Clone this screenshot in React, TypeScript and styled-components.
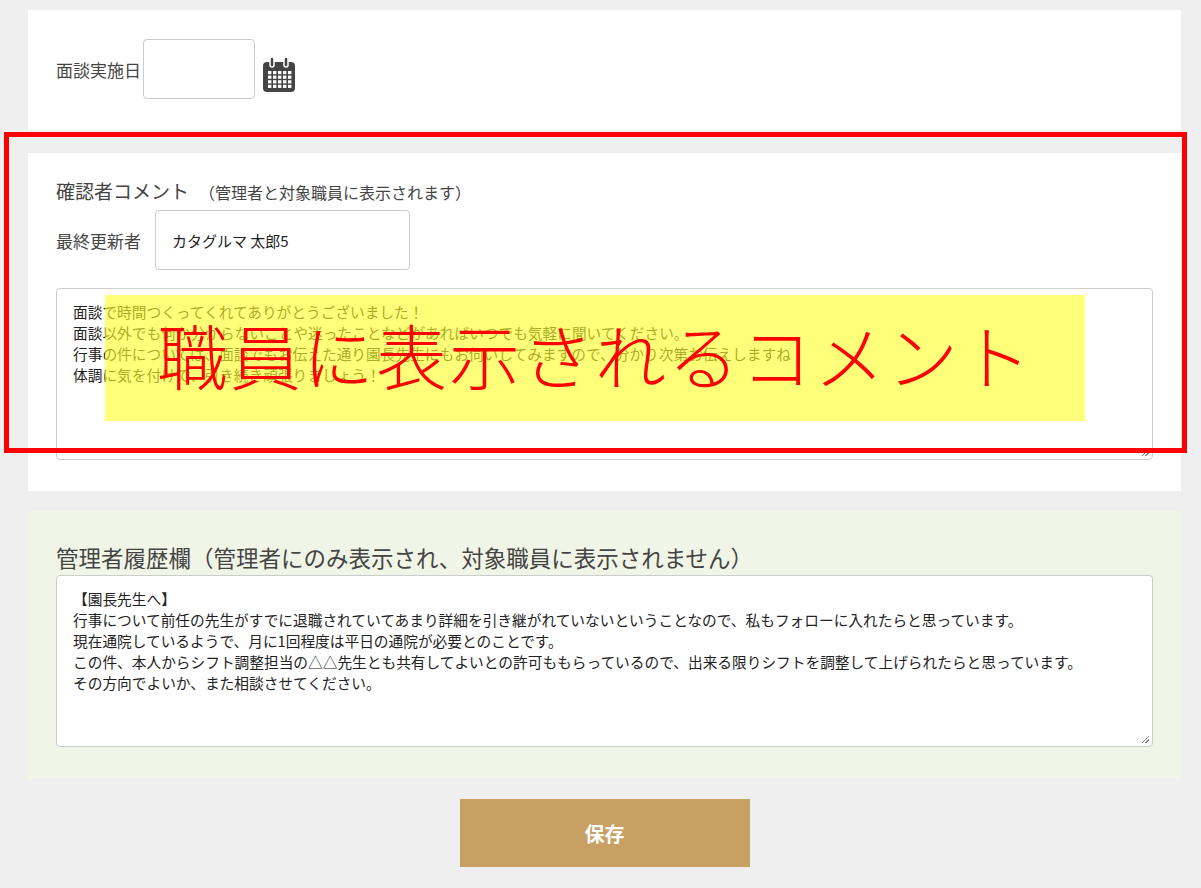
import React from 'react';
import styled, { createGlobalStyle } from 'styled-components';

const Global = createGlobalStyle`
  body {
    margin: 0;
    background: #efefef;
    font-family: "Noto Sans CJK JP", "Noto Sans", sans-serif;
    color: #333;
  }
`;

const Page = styled.div`
  position: relative;
  width: 1153px;
  margin: 0 0 0 28px;
  padding: 10px 0 21px;
  display: flex;
  flex-direction: column;
`;

const Card = styled.section<{ $bg?: string; $mt?: number }>`
  box-sizing: border-box;
  background: ${(p) => p.$bg || '#fff'};
  margin-top: ${(p) => p.$mt || 0}px;
  padding: 0 28px;
  display: flex;
  flex-direction: column;
`;

const Row = styled.div<{ $gap: number }>`
  display: flex;
  align-items: center;
  gap: ${(p) => p.$gap}px;
`;

const Label = styled.span`
  font-size: 17px;
  color: #444;
`;

const Input = styled.div<{ $w: number; $h: number }>`
  width: ${(p) => p.$w}px;
  height: ${(p) => p.$h}px;
  box-sizing: border-box;
  border: 1px solid #ccc;
  border-radius: 4px;
  background: #fff;
  display: flex;
  align-items: center;
  padding: 0 16px;
  font-size: 15px;
  color: #222;
`;

const Title = styled.h3<{ $size: number }>`
  margin: 0;
  font-weight: 400;
  font-size: ${(p) => p.$size}px;
  color: #444;
  small { font-size: 16px; margin-left: 10px; }
`;

const TextArea = styled.div<{ $h: number }>`
  position: relative;
  height: ${(p) => p.$h}px;
  box-sizing: border-box;
  border: 1px solid #ccc;
  border-radius: 4px;
  background: #fff;
  padding: 12px 16px;
  font-size: 14.7px;
  line-height: 21px;
  color: #222;
  white-space: pre-line;
  &::after {
    content: '';
    position: absolute;
    right: 3px;
    bottom: 3px;
    width: 7px;
    height: 7px;
    background: linear-gradient(135deg, transparent 45%, #888 45%, #888 55%, transparent 55%, transparent 70%, #888 70%, #888 80%, transparent 80%);
  }
`;

const SaveButton = styled.button`
  align-self: center;
  margin-top: 20px;
  width: 290px;
  height: 68px;
  border: none;
  background: #c8a064;
  color: #fff;
  font-family: inherit;
  font-size: 20px;
  font-weight: 700;
`;

const RedFrame = styled.div`
  position: absolute;
  left: -24px;
  top: 132px;
  width: 1183px;
  height: 321px;
  box-sizing: border-box;
  border: 5px solid #ff0000;
  pointer-events: none;
`;

const Highlight = styled.div`
  position: absolute;
  left: 77px;
  top: 295px;
  width: 980px;
  height: 126px;
  background: rgba(255, 255, 40, 0.62);
  color: #ff0000;
  font-size: 71px;
  line-height: 1;
  display: flex;
  align-items: center;
  padding: 0 0 10px 52px;
  box-sizing: border-box;
  font-family: "Noto Sans CJK JP", sans-serif;
  font-weight: 300;
  letter-spacing: 2px;
`;

const CalendarIcon = () => (
  <svg width="36" height="38" viewBox="0 0 36 38">
    <rect x="2" y="6" width="32" height="30" rx="4" fill="#444" />
    <rect x="9" y="1" width="4" height="10" rx="2" fill="#444" stroke="#fff" strokeWidth="1.5" />
    <rect x="23" y="1" width="4" height="10" rx="2" fill="#444" stroke="#fff" strokeWidth="1.5" />
    {[0, 1, 2, 3].map((r) =>
      [0, 1, 2, 3, 4].map((c) => (
        <rect key={`${r}-${c}`} x={7 + c * 5} y={15 + r * 4.6} width="3.4" height="3.2" fill="#fff" />
      ))
    )}
  </svg>
);

export default function App() {
  return (
    <>
      <Global />
      <Page>
        <Card style={{ height: 120 }}>
          <Row $gap={2} style={{ marginTop: 29 }}>
            <Label>面談実施日</Label>
            <Input $w={112} $h={60} />
            <span style={{ marginLeft: 4, marginTop: 12, display: 'flex' }}><CalendarIcon /></span>
          </Row>
        </Card>
        <Card $mt={23} style={{ height: 338, paddingTop: 24 }}>
          <Title $size={19}>確認者コメント<small>（管理者と対象職員に表示されます）</small></Title>
          <Row $gap={14} style={{ marginTop: 6 }}>
            <Label>最終更新者</Label>
            <Input $w={255} $h={60}>カタグルマ 太郎5</Input>
          </Row>
          <TextArea $h={172} style={{ marginTop: 18 }}>
            {`面談で時間つくってくれてありがとうございました！
面談以外でも何か分からないことや迷ったことなどがあればいつでも気軽に聞いてください。
行事の件については、面談でもお伝えた通り園長先生にもお伺いしてみますので、分かり次第お伝えしますね！
体調に気を付けて、引き続き頑張りましょう！`}
          </TextArea>
        </Card>
        <Card $bg="#f1f5e7" $mt={20} style={{ height: 268, paddingTop: 30 }}>
          <Title $size={22.5}>管理者履歴欄（管理者にのみ表示され、対象職員に表示されません）</Title>
          <TextArea $h={172} style={{ marginTop: 2 }}>
            {`【園長先生へ】
行事について前任の先生がすでに退職されていてあまり詳細を引き継がれていないということなので、私もフォローに入れたらと思っています。
現在通院しているようで、月に1回程度は平日の通院が必要とのことです。
この件、本人からシフト調整担当の△△先生とも共有してよいとの許可ももらっているので、出来る限りシフトを調整して上げられたらと思っています。
その方向でよいか、また相談させてください。`}
          </TextArea>
        </Card>
        <SaveButton>保存</SaveButton>
        <RedFrame />
        <Highlight>職員に表示されるコメント</Highlight>
      </Page>
    </>
  );
}
